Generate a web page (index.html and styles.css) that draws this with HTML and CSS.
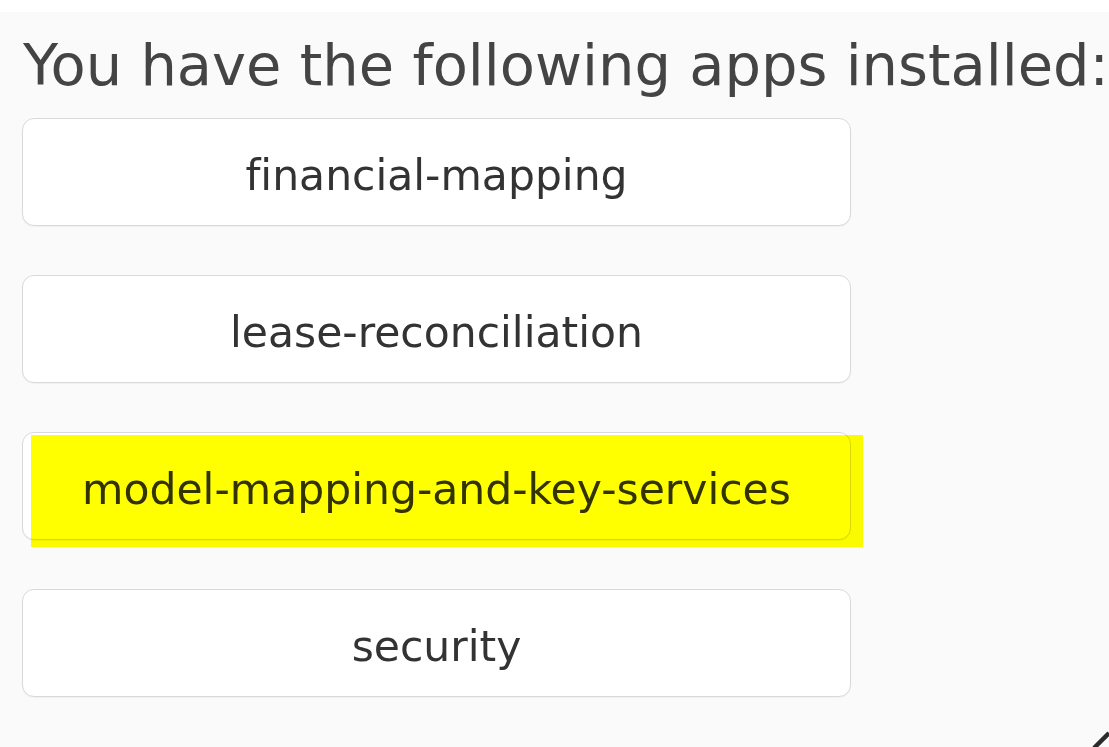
FILE: index.html
```html
<!DOCTYPE html>
<html lang="en">
<head>
  <meta charset="UTF-8">
  <meta name="viewport" content="width=device-width, initial-scale=1.0">
  <title>Installed Apps</title>
  <link rel="stylesheet" href="styles.css">
</head>
<body>

<div class="apps-panel">
  <h2>You have the following apps installed:</h2>
  <div class="app-list">
    <button class="app-button">financial-mapping</button>
    <button class="app-button">lease-reconciliation</button>
    <div class="app-marked">
      <button class="app-button">model-mapping-and-key-services</button>
      <span class="marker"></span>
    </div>
    <button class="app-button">security</button>
  </div>
  <svg class="pen-stroke" width="20" height="20" viewBox="0 0 20 20">
    <line x1="5" y1="21" x2="20" y2="6" stroke="#2b2b2b" stroke-width="4.5"/>
  </svg>
</div>

</body>
</html>
```

FILE: styles.css
```css
/* Installed apps list */
body {
  margin: 0;
  background-color: #fff;
  font-family: "DejaVu Sans", Verdana, sans-serif;
  font-variant-ligatures: none;
}

.apps-panel {
  position: relative;
  margin-top: 12px;
  height: 735px;
  background-color: #fafafa;
  padding: 20px 0 0 22px;
  box-sizing: border-box;
  overflow: hidden;
}

.apps-panel h2 {
  margin: 0 0 19px 1px;
  font-size: 57.5px;
  font-weight: normal;
  line-height: normal;
  color: #444;
  white-space: nowrap;
}

.app-list {
  display: flex;
  flex-direction: column;
  gap: 49px;
  width: 829px;
}

.app-button {
  display: block;
  width: 829px;
  height: 108px;
  padding: 31px 0 25px;
  box-sizing: border-box;
  background-color: #fff;
  border: 1px solid #d9d9d9;
  border-radius: 12px;
  box-shadow: 0 1px 1px rgba(0, 0, 0, 0.04);
  font-family: "DejaVu Sans", Verdana, sans-serif;
  font-variant-ligatures: none;
  font-size: 42.5px;
  line-height: normal;
  color: #333;
  text-align: center;
}

.app-marked {
  position: relative;
}

.marker {
  position: absolute;
  left: 9px;
  top: 3px;
  width: 832px;
  height: 112px;
  background-color: #ffff00;
  mix-blend-mode: multiply;
}

.pen-stroke {
  position: absolute;
  right: 0;
  bottom: 0;
}
```
